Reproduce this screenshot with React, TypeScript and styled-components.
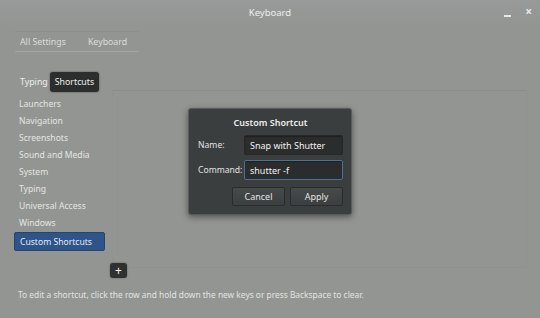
import styled, { createGlobalStyle } from "styled-components";

const GlobalStyle = createGlobalStyle`
  html, body {
    margin: 0;
    padding: 0;
    background: #939592;
  }
  body {
    font-family: "Noto Sans", "Liberation Sans", sans-serif;
    color: #e6e7e6;
  }
`;

const categories = [
  "Launchers",
  "Navigation",
  "Screenshots",
  "Sound and Media",
  "System",
  "Typing",
  "Universal Access",
  "Windows",
];

const App: React.FC = () => {
  return (
    <>
      <GlobalStyle />
      <Window>
        <TitleBar>
          <span className="title">Keyboard</span>
          <div className="controls">
            <span className="min" />
            <span className="close">×</span>
          </div>
        </TitleBar>
        <Breadcrumbs>
          <Crumb>All Settings</Crumb>
          <Crumb>Keyboard</Crumb>
        </Breadcrumbs>
        <Tabs>
          <Tab>Typing</Tab>
          <Tab $active>Shortcuts</Tab>
        </Tabs>
        <Body>
          <Sidebar>
            {categories.map((c) => (
              <Category key={c}>{c}</Category>
            ))}
            <Category $selected>Custom Shortcuts</Category>
            <AddButton>+</AddButton>
          </Sidebar>
          <Pane />
        </Body>
        <Hint>
          To edit a shortcut, click the row and hold down the new keys or press
          Backspace to clear.
        </Hint>
        {/* modal */}
        <Dialog>
          <h2>Custom Shortcut</h2>
          <FormGrid>
            <label>Name:</label>
            <Field>Snap with Shutter</Field>
            <label>Command:</label>
            <Field $focused>shutter -f</Field>
          </FormGrid>
          <Buttons>
            <DialogButton>Cancel</DialogButton>
            <DialogButton>Apply</DialogButton>
          </Buttons>
        </Dialog>
      </Window>
    </>
  );
};

export default App;

const Window = styled.div`
  position: relative;
  width: 540px;
  height: 318px;
  overflow: hidden;
  display: flex;
  flex-direction: column;
  font-size: 9px;
`;

const TitleBar = styled.div`
  height: 27px;
  flex-shrink: 0;
  display: flex;
  align-items: center;
  justify-content: center;
  position: relative;
  background: linear-gradient(#979a99, #939592);
  .title {
    color: #eeeeee;
    font-size: 9.5px;
    margin-top: -2px;
  }
  .controls {
    position: absolute;
    right: 8px;
    top: 6px;
    display: flex;
    align-items: center;
    gap: 14px;
  }
  .min {
    width: 7px;
    height: 2px;
    background: #e8e8e8;
    margin-top: 7px;
  }
  .close {
    color: #e8e8e8;
    font-size: 12px;
    font-weight: 700;
    line-height: 12px;
  }
`;

const Breadcrumbs = styled.div`
  margin-left: 15px;
  margin-top: 4px;
  width: 124px;
  height: 21px;
  flex-shrink: 0;
  box-sizing: border-box;
  border-top: 1px solid #8d8f8d;
  border-bottom: 1px solid #a4a6a4;
  display: flex;
  align-items: center;
  padding-left: 5px;
  gap: 22px;
`;

const Crumb = styled.span`
  color: #dcdddc;
  font-size: 8.8px;
`;

const Tabs = styled.div`
  margin-top: 20px;
  margin-left: 20px;
  height: 20px;
  flex-shrink: 0;
  display: flex;
  align-items: center;
  gap: 2px;
`;

const Tab = styled.span<{ $active?: boolean }>`
  height: 20px;
  display: flex;
  align-items: center;
  font-size: 8.8px;
  color: #eeeeee;
  padding: ${(p) => (p.$active ? "0 5px" : "0")};
  background: ${(p) => (p.$active ? "#2c2e2e" : "transparent")};
  border-radius: 3px;
  box-shadow: ${(p) => (p.$active ? "0 0 2px rgba(0,0,0,0.5)" : "none")};
`;

const Body = styled.div`
  display: flex;
  align-items: flex-start;
  height: 186px;
  flex-shrink: 0;
`;

const Sidebar = styled.div`
  width: 112px;
  padding-left: 14px;
  padding-top: 3px;
  box-sizing: border-box;
  display: flex;
  flex-direction: column;
`;

const Category = styled.div<{ $selected?: boolean }>`
  flex-shrink: 0;
  height: ${(p) => (p.$selected ? "19px" : "17px")};
  margin-top: ${(p) => (p.$selected ? "1px" : "0")};
  width: 91px;
  box-sizing: border-box;
  padding-left: 5px;
  display: flex;
  align-items: center;
  font-size: 8.6px;
  white-space: nowrap;
  color: ${(p) => (p.$selected ? "#e8ecf2" : "#e4e5e4")};
  background: ${(p) => (p.$selected ? "#2f5489" : "transparent")};
  border: ${(p) => (p.$selected ? "1px solid #27446b" : "none")};
  border-radius: 2px;
`;

const AddButton = styled.div`
  position: relative;
  z-index: 1;
  flex-shrink: 0;
  margin-top: 12px;
  margin-left: 96px;
  width: 17px;
  height: 15px;
  border-radius: 3px;
  background: #2f3131;
  color: #f0f0f0;
  font-size: 12px;
  line-height: 15px;
  text-align: center;
  box-shadow: 0 0 2px rgba(0, 0, 0, 0.4);
`;

const Pane = styled.div`
  flex: 1;
  height: 176px;
  margin-top: -2px;
  margin-right: 13px;
  border-top: 1px solid #8a8c8a;
  border-left: 1px solid #909290;
  border-right: 1px solid #909290;
  border-bottom: 1px solid #909290;
`;

const Hint = styled.div`
  margin-top: 11px;
  margin-left: 18px;
  font-size: 8.4px;
  color: #e2e3e2;
  white-space: nowrap;
`;

const Dialog = styled.div`
  position: absolute;
  left: 188px;
  top: 108px;
  width: 164px;
  height: 107px;
  box-sizing: border-box;
  background: #3b3e3e;
  border: 1px solid #595c5c;
  border-radius: 3px;
  box-shadow: 0 2px 6px rgba(0, 0, 0, 0.45);
  padding: 0 8px 0 9px;
  display: flex;
  flex-direction: column;
  h2 {
    margin: 0;
    height: 26px;
    display: flex;
    align-items: center;
    justify-content: center;
    font-size: 9px;
    font-weight: 600;
    color: #eeeeee;
  }
`;

const FormGrid = styled.div`
  display: grid;
  grid-template-columns: 46px 1fr;
  row-gap: 5px;
  align-items: center;
  label {
    font-size: 8.6px;
    color: #e2e2e2;
    white-space: nowrap;
  }
`;

const Field = styled.div<{ $focused?: boolean }>`
  height: 20px;
  box-sizing: border-box;
  padding-left: 5px;
  display: flex;
  align-items: center;
  font-size: 9px;
  color: #f2f2f2;
  background: #2b2d2d;
  border: 1px solid ${(p) => (p.$focused ? "#4d6f99" : "#262828")};
  border-radius: 2px;
  box-shadow: inset 0 1px 1px rgba(0, 0, 0, 0.3);
`;

const Buttons = styled.div`
  display: flex;
  justify-content: flex-end;
  gap: 5px;
  margin-top: 7px;
`;

const DialogButton = styled.div`
  width: 53px;
  height: 19px;
  box-sizing: border-box;
  display: flex;
  align-items: center;
  justify-content: center;
  font-size: 9px;
  color: #e4e4e4;
  background: linear-gradient(#474a4a, #3c3f3f);
  border: 1px solid #2a2c2c;
  border-radius: 2px;
`;
